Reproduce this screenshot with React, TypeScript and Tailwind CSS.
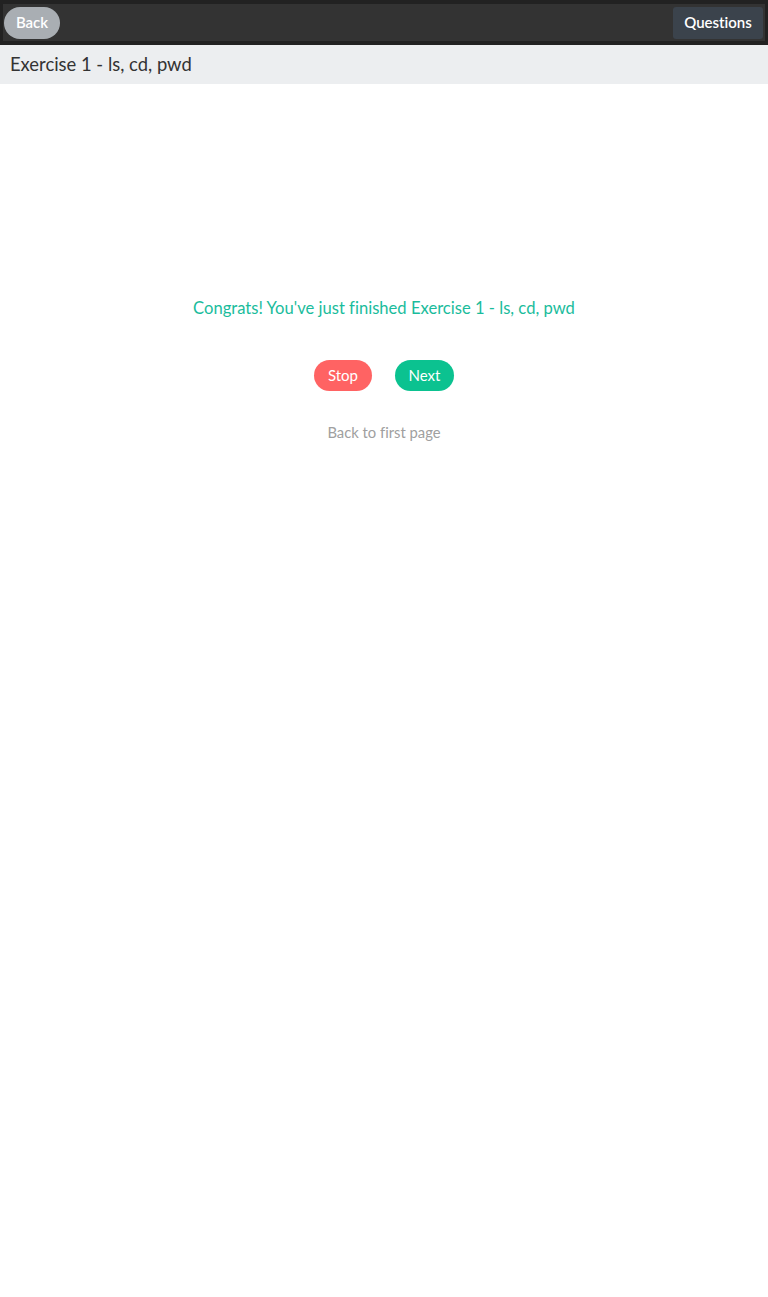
import React from 'react';

const App = () => {
  const title = 'Exercise 1 - ls, cd, pwd';

  return (
    <div className="min-h-[1297px] bg-white font-['Lato','Open_Sans',sans-serif] [font-variant-ligatures:none]">
      {/* top bar */}
      <div className="bg-[#222222] px-[3px] py-[4px]">
        <div className="flex h-[37px] items-center justify-between bg-[#333333] pl-[1px] pr-[2px]">
          <button className="h-[32px] w-[56px] rounded-full bg-[#a9aeb3] text-[15px] font-semibold text-white">
            Back
          </button>
          <button className="h-[32px] w-[90px] rounded-[3px] bg-[#3b434c] text-[15px] font-semibold text-white">
            Questions
          </button>
        </div>
      </div>

      {/* title */}
      <div className="flex h-[39px] items-center bg-[#eceef0] px-[10px] text-[18.4px] text-[#333333]">
        {title}
      </div>

      {/* finished panel */}
      <div className="flex flex-col items-center pt-[212px]">
        <p className="text-[16.6px] text-[#1abc9c]">Congrats! You've just finished {title}</p>
        <div className="mt-[39px] flex gap-[23px]">
          <button className="h-[31px] w-[58px] rounded-full bg-[#ff6363] text-[15px] text-white">Stop</button>
          <button className="h-[31px] w-[59px] rounded-full bg-[#0bc290] text-[15px] text-white">Next</button>
        </div>
        <a className="mt-[30px] cursor-pointer text-[14.8px] text-[#a0a0a0]">Back to first page</a>
      </div>
    </div>
  );
};

export default App;
